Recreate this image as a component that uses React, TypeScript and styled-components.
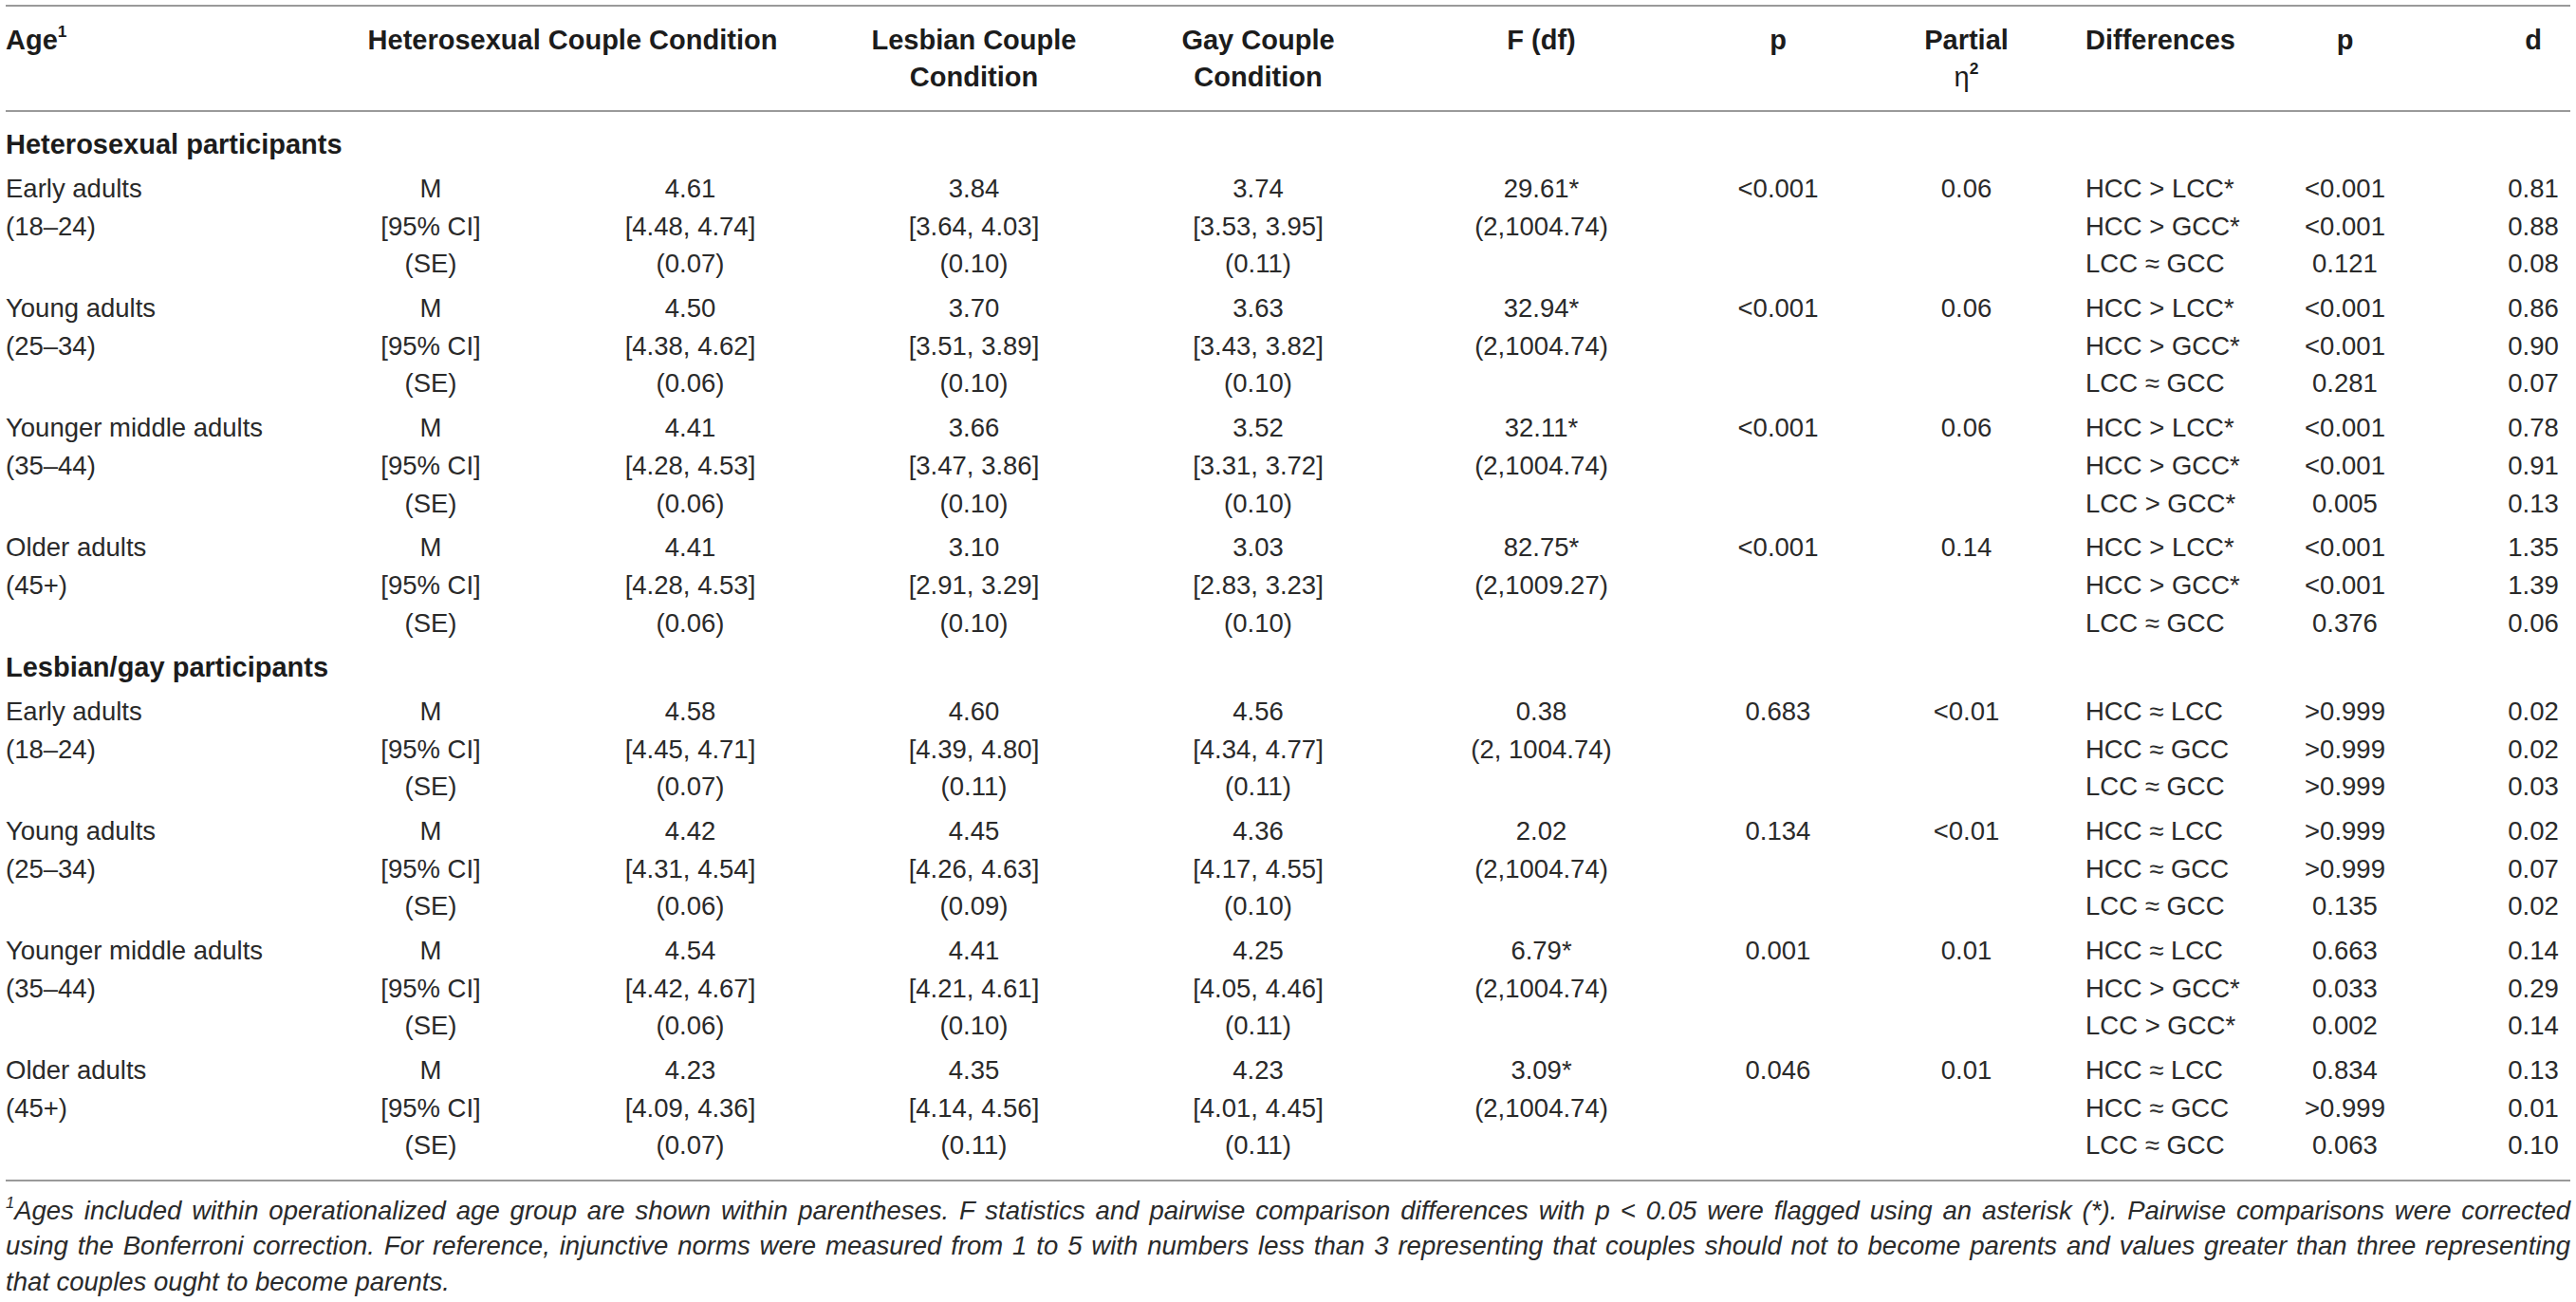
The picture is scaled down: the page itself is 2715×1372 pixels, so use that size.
import React from "react";
import styled, { createGlobalStyle } from "styled-components";

const Global = createGlobalStyle`
  html, body { margin: 0; padding: 0; background: #ffffff; }
  body { font-family: "Liberation Sans", Arial, Helvetica, sans-serif; color: #2a2a2a; }
`;

type Align = "left" | "center";
interface ColSpec { align: Align; pl: number; pr: number; }

const COLS: ColSpec[] = [
  { align: "left", pl: 0, pr: 0 },
  { align: "center", pl: 0, pr: 0 },
  { align: "center", pl: 0, pr: 0 },
  { align: "center", pl: 0, pr: 0 },
  { align: "center", pl: 0, pr: 0 },
  { align: "center", pl: 0, pr: 0 },
  { align: "center", pl: 0, pr: 0 },
  { align: "center", pl: 0, pr: 0 },
  { align: "left", pl: 28, pr: 0 },
  { align: "center", pl: 0, pr: 48 },
  { align: "center", pl: 0, pr: 0 },
];

const TEMPLATE = "324px 248px 299px 299px 300px 297px 202px 195px 190px 271px 78px";

const Page = styled.div`
  padding: 5px 6px 0 6px;
  width: 2703px;
`;

const Table = styled.div`
  border-top: 2px solid #9a9a9a;
  border-bottom: 2px solid #9a9a9a;
`;

const HeadRow = styled.div`
  display: grid;
  grid-template-columns: ${TEMPLATE};
  padding: 16px 0 15px 0;
  border-bottom: 2px solid #9a9a9a;
  font-weight: 700;
  font-size: 29px;
  line-height: 39px;
  color: #1c1c1c;
`;

const Body = styled.div`
  padding: 11px 0 12px 0;
`;

const SectionTitle = styled.div`
  font-weight: 700;
  font-size: 29px;
  line-height: 39.6px;
  padding: 4px 0 3px 0;
  color: #1c1c1c;
`;

const GroupRow = styled.div`
  display: grid;
  grid-template-columns: ${TEMPLATE};
  padding: 3.6px 0 3.7px 0;
  font-size: 27.5px;
  line-height: 39.6px;
`;

const Cell = styled.div<{ $align: Align; $pl: number; $pr: number; $span?: number }>`
  text-align: ${(p) => p.$align};
  padding-left: ${(p) => p.$pl}px;
  padding-right: ${(p) => p.$pr}px;
  grid-column: ${(p) => (p.$span ? `span ${p.$span}` : "auto")};
  white-space: nowrap;
  min-width: 0;
`;

const Line = styled.div`
  white-space: nowrap;
`;

const Sup = styled.sup`
  font-size: 0.6em;
  line-height: 0;
  vertical-align: 0.75em;
  font-weight: 700;
`;

const Eta = styled.span`
  font-weight: 400;
`;

const Footnote = styled.div`
  margin-top: 12px;
  font-style: italic;
  font-size: 27.5px;
  line-height: 37.5px;
  color: #2a2a2a;
`;

const FootLine = styled.div<{ $last?: boolean }>`
  text-align: ${(p) => (p.$last ? "left" : "justify")};
  text-align-last: ${(p) => (p.$last ? "left" : "justify")};
`;

const FootSup = styled.sup`
  font-size: 0.6em;
  line-height: 0;
  vertical-align: 0.7em;
`;

interface Group {
  age: string;
  range: string;
  h: [string, string, string];
  l: [string, string, string];
  g: [string, string, string];
  f: [string, string];
  p: string;
  eta: string;
  diffs: [string, string, string][];
}

const hetero: Group[] = [
  {
    age: "Early adults", range: "(18–24)",
    h: ["4.61", "[4.48, 4.74]", "(0.07)"], l: ["3.84", "[3.64, 4.03]", "(0.10)"], g: ["3.74", "[3.53, 3.95]", "(0.11)"],
    f: ["29.61*", "(2,1004.74)"], p: "<0.001", eta: "0.06",
    diffs: [["HCC > LCC*", "<0.001", "0.81"], ["HCC > GCC*", "<0.001", "0.88"], ["LCC ≈ GCC", "0.121", "0.08"]],
  },
  {
    age: "Young adults", range: "(25–34)",
    h: ["4.50", "[4.38, 4.62]", "(0.06)"], l: ["3.70", "[3.51, 3.89]", "(0.10)"], g: ["3.63", "[3.43, 3.82]", "(0.10)"],
    f: ["32.94*", "(2,1004.74)"], p: "<0.001", eta: "0.06",
    diffs: [["HCC > LCC*", "<0.001", "0.86"], ["HCC > GCC*", "<0.001", "0.90"], ["LCC ≈ GCC", "0.281", "0.07"]],
  },
  {
    age: "Younger middle adults", range: "(35–44)",
    h: ["4.41", "[4.28, 4.53]", "(0.06)"], l: ["3.66", "[3.47, 3.86]", "(0.10)"], g: ["3.52", "[3.31, 3.72]", "(0.10)"],
    f: ["32.11*", "(2,1004.74)"], p: "<0.001", eta: "0.06",
    diffs: [["HCC > LCC*", "<0.001", "0.78"], ["HCC > GCC*", "<0.001", "0.91"], ["LCC > GCC*", "0.005", "0.13"]],
  },
  {
    age: "Older adults", range: "(45+)",
    h: ["4.41", "[4.28, 4.53]", "(0.06)"], l: ["3.10", "[2.91, 3.29]", "(0.10)"], g: ["3.03", "[2.83, 3.23]", "(0.10)"],
    f: ["82.75*", "(2,1009.27)"], p: "<0.001", eta: "0.14",
    diffs: [["HCC > LCC*", "<0.001", "1.35"], ["HCC > GCC*", "<0.001", "1.39"], ["LCC ≈ GCC", "0.376", "0.06"]],
  },
];

const lesbianGay: Group[] = [
  {
    age: "Early adults", range: "(18–24)",
    h: ["4.58", "[4.45, 4.71]", "(0.07)"], l: ["4.60", "[4.39, 4.80]", "(0.11)"], g: ["4.56", "[4.34, 4.77]", "(0.11)"],
    f: ["0.38", "(2, 1004.74)"], p: "0.683", eta: "<0.01",
    diffs: [["HCC ≈ LCC", ">0.999", "0.02"], ["HCC ≈ GCC", ">0.999", "0.02"], ["LCC ≈ GCC", ">0.999", "0.03"]],
  },
  {
    age: "Young adults", range: "(25–34)",
    h: ["4.42", "[4.31, 4.54]", "(0.06)"], l: ["4.45", "[4.26, 4.63]", "(0.09)"], g: ["4.36", "[4.17, 4.55]", "(0.10)"],
    f: ["2.02", "(2,1004.74)"], p: "0.134", eta: "<0.01",
    diffs: [["HCC ≈ LCC", ">0.999", "0.02"], ["HCC ≈ GCC", ">0.999", "0.07"], ["LCC ≈ GCC", "0.135", "0.02"]],
  },
  {
    age: "Younger middle adults", range: "(35–44)",
    h: ["4.54", "[4.42, 4.67]", "(0.06)"], l: ["4.41", "[4.21, 4.61]", "(0.10)"], g: ["4.25", "[4.05, 4.46]", "(0.11)"],
    f: ["6.79*", "(2,1004.74)"], p: "0.001", eta: "0.01",
    diffs: [["HCC ≈ LCC", "0.663", "0.14"], ["HCC > GCC*", "0.033", "0.29"], ["LCC > GCC*", "0.002", "0.14"]],
  },
  {
    age: "Older adults", range: "(45+)",
    h: ["4.23", "[4.09, 4.36]", "(0.07)"], l: ["4.35", "[4.14, 4.56]", "(0.11)"], g: ["4.23", "[4.01, 4.45]", "(0.11)"],
    f: ["3.09*", "(2,1004.74)"], p: "0.046", eta: "0.01",
    diffs: [["HCC ≈ LCC", "0.834", "0.13"], ["HCC ≈ GCC", ">0.999", "0.01"], ["LCC ≈ GCC", "0.063", "0.10"]],
  },
];

const C: React.FC<{ i: number; span?: number; children?: React.ReactNode }> = ({ i, span, children }) => (
  <Cell $align={COLS[i].align} $pl={COLS[i].pl} $pr={COLS[i].pr} $span={span}>
    {children}
  </Cell>
);

const Lines: React.FC<{ items: string[] }> = ({ items }) => (
  <>
    {items.map((t, k) => (
      <Line key={k}>{t}</Line>
    ))}
  </>
);

const GroupView: React.FC<{ g: Group }> = ({ g }) => (
  <GroupRow>
    <C i={0}><Lines items={[g.age, g.range]} /></C>
    <C i={1}><Lines items={["M", "[95% CI]", "(SE)"]} /></C>
    <C i={2}><Lines items={g.h} /></C>
    <C i={3}><Lines items={g.l} /></C>
    <C i={4}><Lines items={g.g} /></C>
    <C i={5}><Lines items={g.f} /></C>
    <C i={6}><Lines items={[g.p]} /></C>
    <C i={7}><Lines items={[g.eta]} /></C>
    <C i={8}><Lines items={g.diffs.map((d) => d[0])} /></C>
    <C i={9}><Lines items={g.diffs.map((d) => d[1])} /></C>
    <C i={10}><Lines items={g.diffs.map((d) => d[2])} /></C>
  </GroupRow>
);

export default function App() {
  return (
    <>
      <Global />
      <Page>
        <Table>
          <HeadRow>
            <C i={0}>Age<Sup>1</Sup></C>
            <Cell $align="center" $pl={0} $pr={0} $span={2}>Heterosexual Couple Condition</Cell>
            <C i={3}><Line>Lesbian Couple</Line><Line>Condition</Line></C>
            <C i={4}><Line>Gay Couple</Line><Line>Condition</Line></C>
            <C i={5}>F (df)</C>
            <C i={6}>p</C>
            <C i={7}><Line>Partial</Line><Line><Eta>η</Eta><Sup>2</Sup></Line></C>
            <C i={8}>Differences</C>
            <C i={9}>p</C>
            <C i={10}>d</C>
          </HeadRow>
          <Body>
            <SectionTitle>Heterosexual participants</SectionTitle>
            {hetero.map((g, k) => <GroupView key={k} g={g} />)}
            <SectionTitle>Lesbian/gay participants</SectionTitle>
            {lesbianGay.map((g, k) => <GroupView key={k} g={g} />)}
          </Body>
        </Table>
        <Footnote>
          <FootLine>
            <FootSup>1</FootSup>Ages included within operationalized age group are shown within parentheses. F statistics and pairwise comparison differences with p &lt; 0.05 were flagged using an asterisk (*). Pairwise comparisons were corrected
          </FootLine>
          <FootLine>
            using the Bonferroni correction. For reference, injunctive norms were measured from 1 to 5 with numbers less than 3 representing that couples should not to become parents and values greater than three representing
          </FootLine>
          <FootLine $last>that couples ought to become parents.</FootLine>
        </Footnote>
      </Page>
    </>
  );
}
